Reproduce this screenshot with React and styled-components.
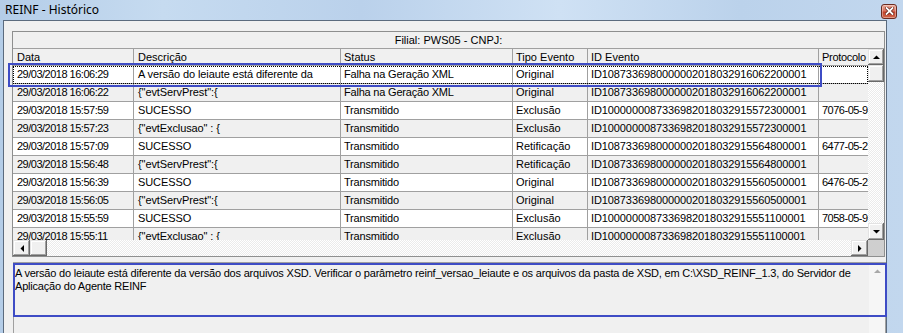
import styled, { createGlobalStyle } from "styled-components";

const GlobalStyle = createGlobalStyle`
  html, body {
    margin: 0;
    padding: 0;
    overflow: hidden;
  }
  body {
    font-family: "Liberation Sans", Arial, sans-serif;
    color: #000;
  }
`;

const Window = styled.div`
  width: 903px;
  height: 333px;
  overflow: hidden;
  display: flex;
  flex-direction: column;
  background: linear-gradient(
    90deg,
    #b4cde8 0%,
    #c6dbf0 18%,
    #bad1eb 40%,
    #cfe1f4 62%,
    #bbd2eb 82%,
    #c2d7ee 100%
  );
`;

const TitleBar = styled.div`
  flex: none;
  height: 20px;
  display: flex;
  align-items: center;
  justify-content: space-between;
  padding: 0 6px 0 5px;
`;

const Title = styled.span`
  font-family: "Noto Sans", "Open Sans", sans-serif;
  font-size: 12px;
  line-height: 16px;
`;

const CloseButton = styled.div`
  width: 16px;
  height: 15px;
  box-sizing: border-box;
  margin-top: 2px;
  display: flex;
  align-items: center;
  justify-content: center;
  border: 1px solid #6b2b21;
  border-radius: 3px;
  background: linear-gradient(#eba997 0%, #d9735f 45%, #c2432d 55%, #d0674d 100%);
  box-shadow: inset 0 0 0 1px rgba(255, 255, 255, 0.35);
`;

const Client = styled.div`
  flex: 1;
  width: 884px;
  margin-left: 3px;
  box-sizing: border-box;
  border: 1px solid #5b6b7e;
  border-bottom: none;
  background: #f0f0f0;
  padding: 10px 1px 0 8px;
  display: flex;
  flex-direction: column;
  gap: 5px;
`;

const Grid = styled.div`
  position: relative;
  width: 873px;
  box-sizing: border-box;
  border: 1px solid #8e8f8f;
  background: #f0f0f0;
`;

const Caption = styled.div`
  height: 16px;
  border-bottom: 1px solid #a0a0a0;
  display: flex;
  align-items: center;
  justify-content: center;
  font-size: 11px;
`;

const GridMain = styled.div`
  display: flex;
  height: 191px;
`;

const Viewport = styled.div`
  width: 855px;
  overflow: hidden;
  background: #fff;
`;

const Row = styled.div`
  display: grid;
  grid-template-columns: 121px 207px 172px 75px 231px 90px;
  height: ${({ $header }) => ($header ? "17px" : "18px")};
  background: ${({ $header, $alt }) => ($header || $alt ? "#f0f0f0" : "#ffffff")};
  outline: ${({ $focused }) => ($focused ? "1px dotted #000" : "none")};
  outline-offset: -1px;
`;

const Cell = styled.div`
  box-sizing: border-box;
  border-right: 1px solid #a0a0a0;
  border-bottom: 1px solid #a0a0a0;
  padding: 0 2px 0 ${({ $pad }) => $pad || "3px"};
  font-size: 11px;
  line-height: ${({ $header }) => ($header ? "16px" : "17px")};
  letter-spacing: ${({ $spacing }) => $spacing || "0"};
  white-space: nowrap;
  overflow: hidden;
`;

const VScroll = styled.div`
  width: 16px;
  display: flex;
  flex-direction: column;
  background: repeating-conic-gradient(#ffffff 0 25%, #ebebeb 0 50%) 0 0 / 2px 2px;
`;

const ScrollButton = styled.div`
  flex: none;
  width: ${({ $w }) => $w || "16px"};
  height: ${({ $h }) => $h || "16px"};
  box-sizing: border-box;
  display: flex;
  align-items: center;
  justify-content: center;
  background: #f0f0f0;
  box-shadow: inset -1px -1px #696969, inset 1px 1px #e3e3e3,
    inset -2px -2px #a0a0a0, inset 2px 2px #ffffff;
`;

const Track = styled.div`
  flex: 1;
`;

const HScroll = styled.div`
  display: flex;
  height: 16px;
  background: repeating-conic-gradient(#ffffff 0 25%, #ebebeb 0 50%) 0 0 / 2px 2px;
`;

const Corner = styled.div`
  width: 16px;
  background: #cfcfcf;
`;

const Highlight = styled.div`
  position: absolute;
  left: ${({ $left }) => $left}px;
  top: ${({ $top }) => $top}px;
  width: ${({ $width }) => $width}px;
  height: ${({ $height }) => $height}px;
  box-sizing: border-box;
  border: 2px solid #3e4cc5;
  pointer-events: none;
`;

const Memo = styled.div`
  position: relative;
  width: 873px;
  height: 90px;
  margin-left: 1px;
  box-sizing: border-box;
  border: 1px solid #a0a0a0;
  background: #f0f0f0;
  display: flex;
`;

const MemoText = styled.div`
  flex: 1;
  padding: 4px 2px 4px 1px;
  font-size: 11px;
  line-height: 13px;
  letter-spacing: -0.2px;
  white-space: nowrap;
  overflow: hidden;
`;

const MemoScroll = styled.div`
  width: 16px;
  display: flex;
  flex-direction: column;
  align-items: center;
  padding-top: 6px;
  background: #f6f6f6;
`;

const Arrow = ({ dir, color = "#000" }) => {
  const pts = {
    up: "0,4 7,4 3.5,0.5",
    down: "0,0 7,0 3.5,3.5",
    left: "4,0 4,7 0.5,3.5",
    right: "0,0 0,7 3.5,3.5",
  }[dir];
  const vertical = dir === "up" || dir === "down";
  return (
    <svg width={vertical ? 7 : 4} height={vertical ? 4 : 7} viewBox={vertical ? "0 0 7 4" : "0 0 4 7"}>
      <polygon points={pts} fill={color} />
    </svg>
  );
};

const CloseGlyph = () => (
  <svg width="9" height="8" viewBox="0 0 9 8">
    <path d="M1.5 1 L7.5 7 M7.5 1 L1.5 7" stroke="#5a1a10" strokeWidth="3.2" strokeLinecap="square" />
    <path d="M1.5 1 L7.5 7 M7.5 1 L1.5 7" stroke="#ffffff" strokeWidth="1.8" strokeLinecap="square" />
  </svg>
);

const columns = ["Data", "Descrição", "Status", "Tipo Evento", "ID Evento", "Protocolo"];

const rows = [
  ["29/03/2018 16:06:29", "A versão do leiaute está diferente da", "Falha na Geração XML", "Original", "ID1087336980000002018032916062200001", ""],
  ["29/03/2018 16:06:22", '{"evtServPrest":{', "Falha na Geração XML", "Original", "ID1087336980000002018032916062200001", ""],
  ["29/03/2018 15:57:59", "SUCESSO", "Transmitido", "Exclusão", "ID1000000087336982018032915572300001", "7076-05-9412"],
  ["29/03/2018 15:57:23", '{"evtExclusao" : {', "Transmitido", "Exclusão", "ID1000000087336982018032915572300001", ""],
  ["29/03/2018 15:57:09", "SUCESSO", "Transmitido", "Retificação", "ID1087336980000002018032915564800001", "6477-05-2218"],
  ["29/03/2018 15:56:48", '{"evtServPrest":{', "Transmitido", "Retificação", "ID1087336980000002018032915564800001", ""],
  ["29/03/2018 15:56:39", "SUCESSO", "Transmitido", "Original", "ID1087336980000002018032915560500001", "6476-05-2871"],
  ["29/03/2018 15:56:05", '{"evtServPrest":{', "Transmitido", "Original", "ID1087336980000002018032915560500001", ""],
  ["29/03/2018 15:55:59", "SUCESSO", "Transmitido", "Exclusão", "ID1000000087336982018032915551100001", "7058-05-9634"],
  ["29/03/2018 15:55:11", '{"evtExclusao" : {', "Transmitido", "Exclusão", "ID1000000087336982018032915551100001", ""],
];

const pads = ["4px", "4px", "3px", "3px", "3px", "3px"];
const spacing = ["-0.5px", "-0.1px", "-0.2px", "0", "-0.1px", "-0.5px"];
const headerSpacing = ["0", "0", "0", "0", "0", "-0.3px"];

export default function App() {
  return (
    <>
      <GlobalStyle />
      <Window>
        <TitleBar>
          <Title>REINF - Histórico</Title>
          <CloseButton>
            <CloseGlyph />
          </CloseButton>
        </TitleBar>
        <Client>
          <Grid>
            <Caption>Filial: PWS05 - CNPJ:</Caption>
            <GridMain>
              <Viewport>
                <Row $header>
                  {columns.map((c, j) => (
                    <Cell key={c} $header $pad={pads[j]} $spacing={headerSpacing[j]}>
                      {c}
                    </Cell>
                  ))}
                </Row>
                {rows.map((r, i) => (
                  <Row key={i} $alt={i % 2 === 1} $focused={i === 0}>
                    {r.map((v, j) => (
                      <Cell key={j} $pad={pads[j]} $spacing={spacing[j]}>
                        {v}
                      </Cell>
                    ))}
                  </Row>
                ))}
              </Viewport>
              <VScroll>
                <ScrollButton>
                  <Arrow dir="up" />
                </ScrollButton>
                <ScrollButton $h="17px" />
                <Track />
                <ScrollButton $h="17px">
                  <Arrow dir="down" />
                </ScrollButton>
              </VScroll>
            </GridMain>
            <HScroll>
              <ScrollButton $w="17px">
                <Arrow dir="left" />
              </ScrollButton>
              <ScrollButton $w="17px" />
              <Track />
              <ScrollButton $w="17px">
                <Arrow dir="right" />
              </ScrollButton>
              <Corner />
            </HScroll>
            <Highlight $left={-5} $top={31} $width={814} $height={24} />
          </Grid>
          <Memo>
            <MemoText>
              A versão do leiaute está diferente da versão dos arquivos XSD. Verificar o parâmetro reinf_versao_leiaute e os
              arquivos da pasta de XSD, em C:\XSD_REINF_1.3, do Servidor de
              <br />
              Aplicação do Agente REINF
            </MemoText>
            <MemoScroll>
              <Arrow dir="up" color="#a8a8a8" />
            </MemoScroll>
            <Highlight $left={-1} $top={0} $width={874} $height={54} />
          </Memo>
        </Client>
      </Window>
    </>
  );
}
